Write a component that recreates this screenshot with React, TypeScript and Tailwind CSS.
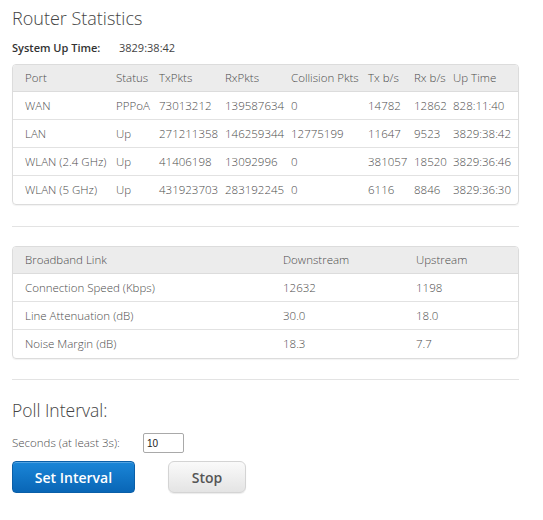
const ports = [
  ["WAN", "PPPoA", "73013212", "139587634", "0", "14782", "12862", "828:11:40"],
  ["LAN", "Up", "271211358", "146259344", "12775199", "11647", "9523", "3829:38:42"],
  ["WLAN (2.4 GHz)", "Up", "41406198", "13092996", "0", "381057", "18520", "3829:36:46"],
  ["WLAN (5 GHz)", "Up", "431923703", "283192245", "0", "6116", "8846", "3829:36:30"],
];

const portHeads = ["Port", "Status", "TxPkts", "RxPkts", "Collision Pkts", "Tx b/s", "Rx b/s", "Up Time"];

const link = [
  ["Connection Speed (Kbps)", "12632", "1198"],
  ["Line Attenuation (dB)", "30.0", "18.0"],
  ["Noise Margin (dB)", "18.3", "7.7"],
];

const portCols = "grid-cols-[91px_43px_66px_66px_77px_46px_39px_1fr]";
const linkCols = "grid-cols-[258px_133px_1fr]";

export default function App() {
  return (
    <div
      className="w-[543px] h-[520px] bg-white pl-3 pr-[24px] pt-[6px] text-[#4d4d4d]"
      style={{ fontFamily: '"Open Sans", "Noto Sans", sans-serif' }}
    >
      <h1 className="text-[18px] font-light leading-[24px] text-[#444]">Router Statistics</h1>

      <div className="mt-[11px] flex items-center text-[11px] leading-[14px]">
        <span className="w-[107px] font-semibold text-[#333]">System Up Time:</span>
        <span className="text-[#444]">3829:38:42</span>
      </div>

      <div className="mt-[9px] rounded-[4px] border border-[#dcdcdc] overflow-hidden text-[11.5px] font-light shadow-[0_1px_1px_rgba(0,0,0,0.05)]">
        <div className={`grid ${portCols} h-[27px] items-center bg-[#ececec] pl-[12px] border-b border-[#dcdcdc]`}>
          {portHeads.map((h) => (
            <span key={h} className="whitespace-nowrap">{h}</span>
          ))}
        </div>
        {ports.map((r, i) => (
          <div
            key={r[0]}
            className={`grid ${portCols} h-[28px] items-center pl-[12px] ${i < ports.length - 1 ? "border-b border-[#e2e2e2]" : ""}`}
          >
            {r.map((c, j) => (
              <span key={j} className="whitespace-nowrap">{c}</span>
            ))}
          </div>
        ))}
      </div>

      <div className="mt-[21px] border-t border-[#e3e3e3]" />

      <div className="mt-[19px] rounded-[4px] border border-[#dcdcdc] overflow-hidden text-[11.5px] font-light shadow-[0_1px_1px_rgba(0,0,0,0.05)]">
        <div className={`grid ${linkCols} h-[27px] items-center bg-[#ececec] pl-[12px] border-b border-[#dcdcdc]`}>
          <span>Broadband Link</span>
          <span>Downstream</span>
          <span>Upstream</span>
        </div>
        {link.map((r, i) => (
          <div
            key={r[0]}
            className={`grid ${linkCols} h-[28px] items-center pl-[12px] ${i < link.length - 1 ? "border-b border-[#e2e2e2]" : ""}`}
          >
            {r.map((c, j) => (
              <span key={j}>{c}</span>
            ))}
          </div>
        ))}
      </div>

      <div className="mt-[20px] border-t border-[#e3e3e3]" />

      <h2 className="mt-[18px] text-[17.5px] font-light leading-[24px] text-[#444]">Poll Interval:</h2>

      <div className="mt-[11px] flex items-center text-[11.5px] font-light">
        <span className="w-[131px]">Seconds (at least 3s):</span>
        <input
          defaultValue="10"
          className="w-[41px] h-[20px] border border-[#a9a9a9] rounded-[2px] px-[3px] text-[10px] font-normal text-[#222] outline-none"
          style={{ fontFamily: '"Liberation Sans", Arial, sans-serif' }}
        />
      </div>

      <div className="mt-[8px] flex items-center">
        <button className="w-[123px] h-[32px] rounded-[4px] bg-gradient-to-b from-[#1a86d8] to-[#0966b6] border border-[#0a5fa8] text-white text-[14px] font-semibold shadow-[inset_0_1px_0_rgba(255,255,255,0.25)]">
          Set Interval
        </button>
        <button className="ml-[33px] w-[78px] h-[32px] rounded-[6px] bg-gradient-to-b from-[#fafafa] to-[#e4e4e4] border border-[#d4d4d4] text-[#555] text-[14px] font-semibold shadow-[0_1px_1px_rgba(0,0,0,0.08)]">
          Stop
        </button>
      </div>
    </div>
  );
}
